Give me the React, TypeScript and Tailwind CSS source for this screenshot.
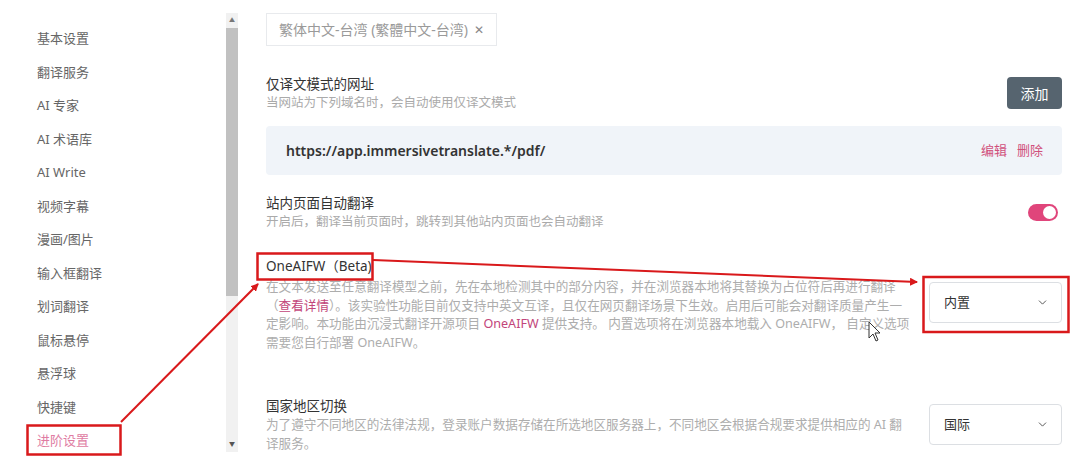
import { ChevronDown } from "lucide-react";

const navItems = [
  "基本设置",
  "翻译服务",
  "AI 专家",
  "AI 术语库",
  "AI Write",
  "视频字幕",
  "漫画/图片",
  "输入框翻译",
  "划词翻译",
  "鼠标悬停",
  "悬浮球",
  "快捷键",
  "进阶设置",
];

const font = "font-['Noto_Sans','Noto_Sans_CJK_SC',sans-serif]";

const Sidebar = () => {
  return (
    <aside className="flex w-[266px] shrink-0">
      <nav className="w-[226px] pl-[37px] pt-[22px]">
        {navItems.map((item) => (
          <div
            key={item}
            className={`flex h-[33.5px] items-center text-[13px] ${
              item === "进阶设置" ? "text-[#e07ca3]" : "text-[#666]"
            }`}
          >
            {item}
          </div>
        ))}
      </nav>
      {/* scrollbar */}
      <div className="mt-[13px] flex h-[439px] w-[12px] flex-col items-center bg-[#f1f1f1]">
        <div className="flex h-[15px] items-center justify-center text-[6px] text-[#777]">▲</div>
        <div className="h-[268px] w-full bg-[#c1c1c1]" />
        <div className="flex-1" />
        <div className="flex h-[15px] items-center justify-center text-[6px] text-[#555]">▼</div>
      </div>
    </aside>
  );
};

const Select = ({ value }: { value: string }) => (
  <div className="flex h-[41px] w-[133px] shrink-0 items-center justify-between rounded-[4px] border border-[#dcdfe3] bg-white pl-[14px] pr-[12px] text-[13px] text-[#333]">
    <span>{value}</span>
    <ChevronDown size={13} strokeWidth={1.8} className="text-[#555]" />
  </div>
);

const Main = () => {
  return (
    <main className="flex-1 pr-[18px] pt-[13px]">
      {/* selected language tag */}
      <div className="inline-flex h-[33px] items-center gap-[6px] border border-[#e8eaed] pl-[12px] pr-[12px] text-[14px] text-[#9a9a9a]">
        <span>繁体中文-台湾 (繁體中文-台湾)</span>
        <span className="text-[12px] text-[#888]">✕</span>
      </div>

      {/* translation-only urls */}
      <div className="mt-[28px] flex items-center justify-between">
        <div>
          <div className="text-[13.5px] leading-[20px] text-[#333]">仅译文模式的网址</div>
          <div className="text-[12.5px] leading-[18px] text-[#aaa]">当网站为下列域名时，会自动使用仅译文模式</div>
        </div>
        <button className="h-[32px] w-[55px] rounded-[4px] bg-[#56646f] text-[14px] text-white">添加</button>
      </div>

      <div className="mt-[14px] flex h-[49px] items-center justify-between rounded-[4px] bg-[#f0f4f9] pl-[20px] pr-[19px]">
        <span className="text-[14px] font-semibold text-[#333]">https://app.immersivetranslate.*/pdf/</span>
        <div className="flex gap-[10px] text-[13px] text-[#d0507c]">
          <span>编辑</span>
          <span>删除</span>
        </div>
      </div>

      {/* auto translate inside site */}
      <div className="mt-[18px] flex items-center justify-between">
        <div>
          <div className="text-[13.5px] leading-[20px] text-[#333]">站内页面自动翻译</div>
          <div className="text-[12.5px] leading-[18px] text-[#aaa]">开启后，翻译当前页面时，跳转到其他站内页面也会自动翻译</div>
        </div>
        <div className="mr-[4px] flex h-[17px] w-[30px] items-center justify-end rounded-full bg-[#e0457b] pr-[2px]">
          <div className="h-[13px] w-[13px] rounded-full bg-white" />
        </div>
      </div>

      {/* OneAIFW */}
      <div className="mt-[25px] flex justify-between gap-[19px]">
        <div className="w-[643px]">
          <div className="text-[13.5px] leading-[20px] text-[#333]">OneAIFW（Beta)</div>
          <p className="mt-[2px] whitespace-nowrap text-[12.6px] leading-[18.7px] text-[#adadad]">
            在文本发送至任意翻译模型之前，先在本地检测其中的部分内容，并在浏览器本地将其替换为占位符后再进行翻译
            <br />
            （<span className="text-[#c2457a]">查看详情</span>）。该实验性功能目前仅支持中英文互译，且仅在网页翻译场景下生效。启用后可能会对翻译质量产生一
            <br />
            定影响。本功能由沉浸式翻译开源项目 <span className="text-[#c2457a]">OneAIFW</span> 提供支持。 内置选项将在浏览器本地载入 OneAIFW， 自定义选项
            <br />
            需要您自行部署 OneAIFW。
          </p>
        </div>
        <div className="pt-[26px]">
          <Select value="内置" />
        </div>
      </div>

      {/* region */}
      <div className="mt-[43px] flex items-center justify-between gap-[19px]">
        <div className="w-[643px]">
          <div className="text-[13.5px] leading-[20px] text-[#333]">国家地区切换</div>
          <p className="whitespace-nowrap text-[12.6px] leading-[18.7px] text-[#adadad]">
            为了遵守不同地区的法律法规，登录账户数据存储在所选地区服务器上，不同地区会根据合规要求提供相应的 AI 翻
            <br />
            译服务。
          </p>
        </div>
        <Select value="国际" />
      </div>
    </main>
  );
};

const Annotations = () => (
  <svg className="pointer-events-none absolute left-0 top-0" width="1080" height="469" viewBox="0 0 1080 469">
    <defs>
      <marker id="head" markerWidth="8" markerHeight="8" refX="7" refY="4" orient="auto" markerUnits="userSpaceOnUse">
        <path d="M0 0 L8 4 L0 8 Z" fill="#d9191b" />
      </marker>
    </defs>
    <g fill="none" stroke="#d9191b" strokeWidth="2.5">
      <rect x="257.5" y="253.5" width="115" height="26" />
      <rect x="923.5" y="277" width="145" height="55" />
      <rect x="27.5" y="425.5" width="93" height="29" />
    </g>
    <g stroke="#d9191b" strokeWidth="2">
      <line x1="373" y1="260" x2="917" y2="282" markerEnd="url(#head)" />
      <line x1="121" y1="422" x2="258" y2="284" markerEnd="url(#head)" />
    </g>
    {/* mouse cursor */}
    <path d="M869 322 L869 338 L873 334 L876 341 L878 340 L875 333 L880 333 Z" fill="white" stroke="#333" strokeWidth="1" />
  </svg>
);

export default function App() {
  return (
    <div className={`relative flex h-[469px] w-[1080px] overflow-hidden bg-white ${font}`}>
      <Sidebar />
      <Main />
      <Annotations />
    </div>
  );
}
